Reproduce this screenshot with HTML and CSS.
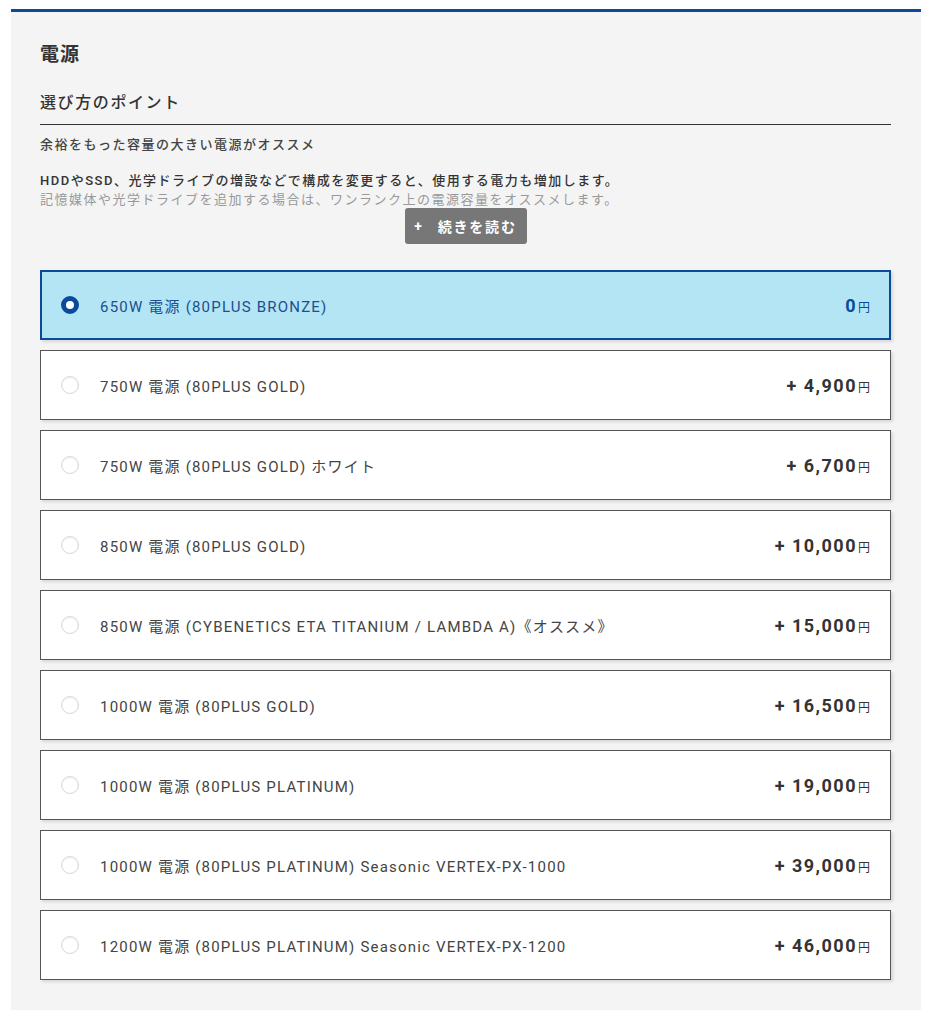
FILE: index.html
```html
<!DOCTYPE html>
<html lang="ja">
<head>
<meta charset="utf-8">
<link rel="stylesheet" href="styles.css">
</head>
<body>
<section class="panel">
  <h2 class="title">電源</h2>
  <h3 class="subtitle">選び方のポイント</h3>
  <p class="lead">余裕をもった容量の大きい電源がオススメ</p>
  <div class="desc">
    <p>HDDやSSD、光学ドライブの増設などで構成を変更すると、使用する電力も増加します。</p>
    <p class="fade">記憶媒体や光学ドライブを追加する場合は、ワンランク上の電源容量をオススメします。</p>
    <button class="more"><span class="plus">+</span>続きを読む</button>
  </div>
  <ul class="options">
    <li class="option selected"><span class="radio"></span><span class="name">650W 電源 (80PLUS BRONZE)</span><span class="price">0<small>円</small></span></li>
    <li class="option"><span class="radio"></span><span class="name">750W 電源 (80PLUS GOLD)</span><span class="price">+ 4,900<small>円</small></span></li>
    <li class="option"><span class="radio"></span><span class="name">750W 電源 (80PLUS GOLD) ホワイト</span><span class="price">+ 6,700<small>円</small></span></li>
    <li class="option"><span class="radio"></span><span class="name">850W 電源 (80PLUS GOLD)</span><span class="price">+ 10,000<small>円</small></span></li>
    <li class="option"><span class="radio"></span><span class="name">850W 電源 (CYBENETICS ETA TITANIUM / LAMBDA A)《オススメ》</span><span class="price">+ 15,000<small>円</small></span></li>
    <li class="option"><span class="radio"></span><span class="name">1000W 電源 (80PLUS GOLD)</span><span class="price">+ 16,500<small>円</small></span></li>
    <li class="option"><span class="radio"></span><span class="name">1000W 電源 (80PLUS PLATINUM)</span><span class="price">+ 19,000<small>円</small></span></li>
    <li class="option"><span class="radio"></span><span class="name">1000W 電源 (80PLUS PLATINUM) Seasonic VERTEX-PX-1000</span><span class="price">+ 39,000<small>円</small></span></li>
    <li class="option"><span class="radio"></span><span class="name">1200W 電源 (80PLUS PLATINUM) Seasonic VERTEX-PX-1200</span><span class="price">+ 46,000<small>円</small></span></li>
  </ul>
</section>
</body>
</html>
```
FILE: styles.css
```css
html, body { margin: 0; padding: 0; background: #fff; }
body {
  font-family: Roboto, "Noto Sans CJK JP", "Liberation Sans", sans-serif;
  color: #333;
  padding: 9px 12px 14px 11px;
}
.panel {
  background: #f4f4f4;
  border-top: 3px solid #0b4a98;
  padding: 30px 30px 30px 29px;
}
.title {
  margin: 0;
  font-size: 19px;
  font-weight: 700;
  line-height: 26px;
  color: #333;
  letter-spacing: 1px;
}
.subtitle {
  margin: 24px 0 0;
  font-size: 16px;
  font-weight: 500;
  line-height: 22px;
  padding-bottom: 10px;
  border-bottom: 1px solid #333;
  color: #333;
  letter-spacing: 1.6px;
}
.lead {
  margin: 11px 0 0;
  font-size: 13px;
  font-weight: 500;
  line-height: 18px;
  color: #444;
  letter-spacing: 1.5px;
}
.desc {
  margin-top: 17px;
  display: flex;
  flex-direction: column;
  align-items: center;
}
.desc p {
  margin: 0;
  align-self: stretch;
  font-size: 13px;
  line-height: 20px;
  color: #333;
  font-weight: 500;
  letter-spacing: 1.5px;
}
.desc p.fade { color: #999; font-weight: 400; line-height: 18px; }
.more {
  margin-top: -1px;
  background: #777;
  color: #fff;
  border: 0;
  border-radius: 3px;
  height: 36px;
  width: 122px;
  font-family: inherit;
  font-size: 14px;
  font-weight: 700;
  display: flex;
  align-items: center;
  justify-content: center;
  gap: 14px;
  padding: 0;
  letter-spacing: 1.8px;
}
.options {
  list-style: none;
  margin: 26px 0 0;
  padding: 0;
  display: flex;
  flex-direction: column;
  gap: 10px;
}
.option {
  height: 70px;
  box-sizing: border-box;
  background: #fff;
  border: 1px solid #555;
  box-shadow: 2px 2px 3px rgba(0,0,0,0.12);
  display: flex;
  align-items: center;
  padding: 0 20px 0 20px;
  font-size: 15px;
  letter-spacing: 1.2px;
  color: #444;
}
.option .radio {
  width: 18px;
  height: 18px;
  border-radius: 50%;
  box-sizing: border-box;
  border: 1px solid #d8d8d8;
  background: #fff;
  box-shadow: inset 0 1px 2px rgba(0,0,0,0.08);
  margin-right: 21px;
  flex: none;
}
.option .name { flex: 1; }
.option .price {
  font-size: 18px;
  font-weight: 700;
  color: #333;
  letter-spacing: 1.5px;
}
.option .price small {
  font-size: 12px;
  font-weight: 400;
  margin-left: 1px;
  letter-spacing: 0;
}
.option.selected {
  background: #b3e5f5;
  border: 2px solid #0b4a98;
  color: #1d4f8f;
  padding: 0 19px;
}
.option.selected .radio {
  border: 5px solid #0b4a98;
  box-shadow: none;
}
.option.selected .price { color: #0b4a98; }
```
